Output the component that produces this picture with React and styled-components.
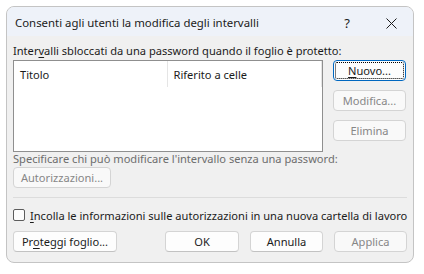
import styled, { createGlobalStyle } from 'styled-components';

const Global = createGlobalStyle`
  body {
    margin: 0;
    background: #ffffff;
    font-family: "Segoe UI", "Noto Sans", sans-serif;
  }
`;

const Page = styled.div`
  width: 424px;
  height: 274px;
  padding: 6px;
  box-sizing: border-box;
`;

const Dialog = styled.div`
  width: 408px;
  height: 257px;
  box-sizing: border-box;
  border: 1px solid #c4c4c4;
  border-radius: 8px;
  background: #f0f0f0;
  overflow: hidden;
  display: flex;
  flex-direction: column;
  font-size: 11.1px;
  color: #1b1b1b;
`;

const TitleBar = styled.div`
  height: 29px;
  background: #eef2f9;
  display: flex;
  align-items: center;
  padding-left: 8px;
  flex-shrink: 0;
`;

const Title = styled.div`
  flex: 1;
  font-size: 11.4px;
  padding-top: 2px;
`;

const Help = styled.div`
  width: 44px;
  text-align: center;
  font-size: 13px;
  padding-top: 2px;
`;

const Close = styled.div`
  width: 44px;
  display: flex;
  justify-content: center;
  padding-top: 3px;
`;

const Body = styled.div`
  padding: 7px 6px 0 6px;
  display: flex;
  flex-direction: column;
`;

const Label = styled.div`
  height: ${p => p.$h || 16}px;
  line-height: ${p => p.$h || 16}px;
  white-space: nowrap;
  color: ${p => (p.$dim ? '#6d6d6d' : '#1b1b1b')};
`;

const Main = styled.div`
  display: flex;
  margin-top: 1px;
`;

const List = styled.div`
  width: 310px;
  height: 92px;
  box-sizing: border-box;
  border: 1px solid #8f8f8f;
  background: #fff;
`;

const Header = styled.div`
  display: flex;
  height: 26px;
`;

const Col = styled.div`
  width: ${p => p.$w}px;
  box-sizing: border-box;
  padding-left: 6px;
  padding-top: 6px;
  border-right: 1px solid #e5e5e5;
`;

const Side = styled.div`
  display: flex;
  flex-direction: column;
  gap: 9px;
  margin-left: 10px;
`;

const Button = styled.div`
  width: ${p => p.$w || 73}px;
  height: 21px;
  box-sizing: border-box;
  border: 1px solid ${p => (p.$focus ? '#0067c0' : '#d4d4d4')};
  border-bottom-color: ${p => (p.$focus ? '#0067c0' : p.$disabled ? '#d4d4d4' : '#c2c2c2')};
  border-radius: 4px;
  background: ${p => (p.$disabled ? '#f9f9f9' : '#fdfdfd')};
  color: ${p => (p.$disabled ? '#878787' : '#1b1b1b')};
  display: flex;
  align-items: center;
  justify-content: center;
  position: relative;
  white-space: nowrap;
  flex-shrink: 0;
  ${p => p.$focus && `
    &::after {
      content: '';
      position: absolute;
      inset: 1px;
      border: 1px dotted #000;
      border-radius: 2px;
    }
  `}
`;

const U = styled.span`
  text-decoration: underline;
  text-underline-offset: 2px;
`;

const Sep = styled.div`
  height: 1px;
  background: #dcdcdc;
  margin: 9px 0 0 0;
`;

const CheckRow = styled.div`
  display: flex;
  align-items: center;
  height: 16px;
  margin-top: 9px;
  white-space: nowrap;
`;

const Box = styled.div`
  width: 12px;
  height: 12px;
  flex-shrink: 0;
  box-sizing: border-box;
  border: 1px solid #5c5c5c;
  border-radius: 2px;
  background: #fdfdfd;
  margin-right: 5px;
`;

const Footer = styled.div`
  display: flex;
  margin-top: 8px;
`;

const Gap = styled.div`
  width: ${p => p.$w}px;
  flex-shrink: 0;
`;

export default function App() {
  return (
    <Page>
      <Global />
      <Dialog>
        <TitleBar>
          <Title>Consenti agli utenti la modifica degli intervalli</Title>
          <Help>?</Help>
          <Close>
            <svg width="11" height="11" viewBox="0 0 11 11">
              <path d="M0.5 0.5 L10.5 10.5 M10.5 0.5 L0.5 10.5" stroke="#1b1b1b" strokeWidth="1" />
            </svg>
          </Close>
        </TitleBar>
        <Body>
          <Label>
            Inter<U>v</U>alli sbloccati da una password quando il foglio è protetto:
          </Label>
          <Main>
            <List>
              <Header>
                <Col $w={154}>Titolo</Col>
                <Col $w={155}>Riferito a celle</Col>
              </Header>
            </List>
            <Side>
              <Button $focus>
                <span><U>N</U>uovo...</span>
              </Button>
              <Button $disabled>Modifica...</Button>
              <Button $disabled>Elimina</Button>
            </Side>
          </Main>
          <Label $dim $h={14}>
            Specificare chi può modificare l'intervallo senza una password:
          </Label>
          <div style={{ marginTop: 1 }}>
            <Button $disabled $w={98}>Autorizzazioni...</Button>
          </div>
          <Sep />
          <CheckRow>
            <Box />
            <span><U>I</U>ncolla le informazioni sulle autorizzazioni in una nuova cartella di lavoro</span>
          </CheckRow>
          <Footer>
            <Button $w={104}><span>Pr<U>o</U>teggi foglio...</span></Button>
            <Gap $w={48} />
            <Button $w={74}>OK</Button>
            <Gap $w={11} />
            <Button>Annulla</Button>
            <Gap $w={11} />
            <Button $disabled>Applica</Button>
          </Footer>
        </Body>
      </Dialog>
    </Page>
  );
}
